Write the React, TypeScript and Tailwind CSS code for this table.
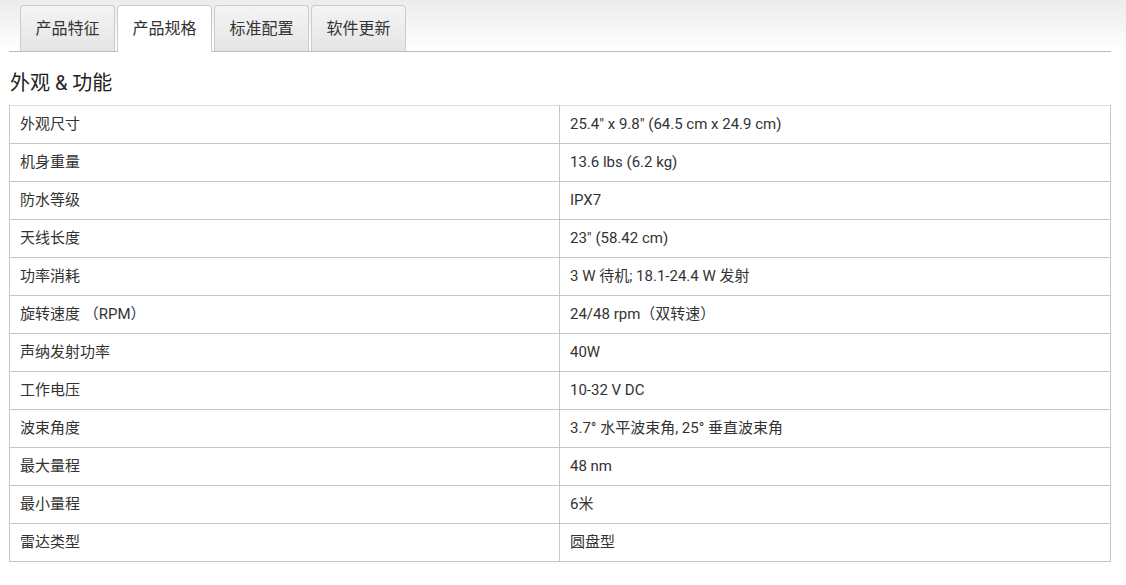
const TABS = ["产品特征", "产品规格", "标准配置", "软件更新"];

const SPECS: [string, string][] = [
  ["外观尺寸", '25.4" x 9.8" (64.5 cm x 24.9 cm)'],
  ["机身重量", "13.6 lbs (6.2 kg)"],
  ["防水等级", "IPX7"],
  ["天线长度", '23" (58.42 cm)'],
  ["功率消耗", "3 W 待机; 18.1-24.4 W 发射"],
  ["旋转速度 （RPM）", "24/48 rpm（双转速）"],
  ["声纳发射功率", "40W"],
  ["工作电压", "10-32 V DC"],
  ["波束角度", "3.7° 水平波束角, 25° 垂直波束角"],
  ["最大量程", "48 nm"],
  ["最小量程", "6米"],
  ["雷达类型", "圆盘型"],
];

export default function App() {
  return (
    <div className="min-h-[585px] w-[1126px] bg-white font-['Roboto','Noto_Sans_CJK_SC',sans-serif] text-[#333]">
      {/* tab strip */}
      <div className="bg-gradient-to-b from-[#ececec] to-white pt-[5px]">
        <div className="mr-[15px] ml-[9px] flex gap-[2px] border-b border-[#bbb] pl-[11px]">
          {TABS.map((tab, i) => (
            <div
              key={tab}
              className={
                i === 1
                  ? "-mb-px flex h-[47px] w-[95px] items-center justify-center rounded-t-[4px] border border-b-0 border-[#ccc] bg-white text-[16px]"
                  : "flex h-[46px] w-[95px] items-center justify-center rounded-t-[4px] border border-b-0 border-[#ccc] bg-gradient-to-b from-[#f4f4f4] to-[#e5e5e5] text-[16px]"
              }
            >
              {tab}
            </div>
          ))}
        </div>
      </div>

      <h2 className="mt-[18px] ml-[10px] text-[20px] leading-[26px] text-[#222]">外观 &amp; 功能</h2>

      <table className="mt-[9px] ml-[9px] w-[1102px] border-collapse text-[15px]">
        <tbody>
          {SPECS.map(([label, value], i) => (
            <tr key={label} className={i === 0 ? "h-[38px] border-t border-[#ddd]" : "h-[38px]"}>
              <td className="w-[550px] border-x border-b border-[#c6c6c6] px-[10px] align-middle">{label}</td>
              <td className="border-x border-b border-[#c6c6c6] px-[10px] align-middle">{value}</td>
            </tr>
          ))}
        </tbody>
      </table>
    </div>
  );
}
